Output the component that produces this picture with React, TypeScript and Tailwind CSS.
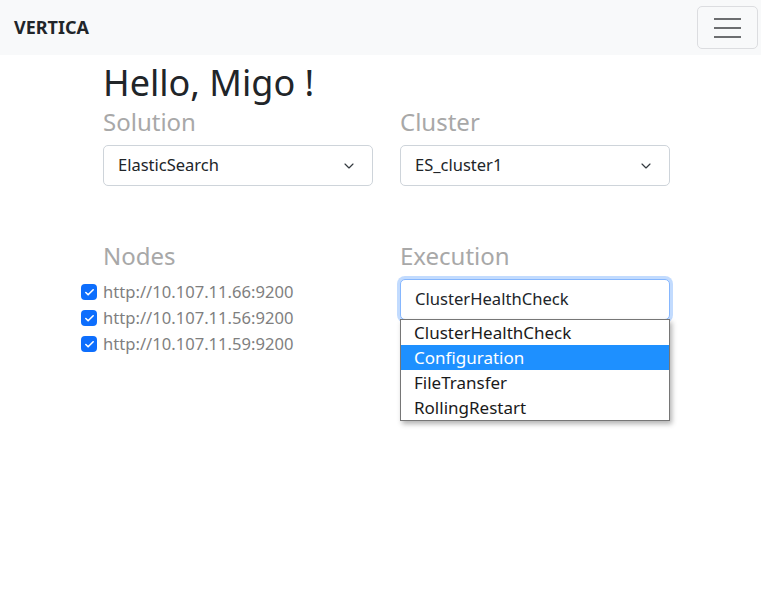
import { ChevronDown, Check } from "lucide-react";

const nodes = ["http://10.107.11.66:9200", "http://10.107.11.56:9200", "http://10.107.11.59:9200"];
const executions = ["ClusterHealthCheck", "Configuration", "FileTransfer", "RollingRestart"];

function SelectBox({ value }: { value: string }) {
  return (
    <div className="flex h-[41px] items-center justify-between rounded-[5px] border border-[#ced4da] bg-white pl-[14px] pr-[15px] text-[16.5px] text-[#212529]">
      <span>{value}</span>
      <ChevronDown size={16} strokeWidth={1.75} className="text-[#343a40]" />
    </div>
  );
}

export default function App() {
  return (
    <div className="min-h-[609px] bg-white font-['Noto_Sans',sans-serif] text-[#212529]">
      <nav className="flex h-[55px] items-center justify-between bg-[#f8f9fa] pl-[14px] pr-[3px]">
        <span className="text-[18px] font-bold text-[#212529]">VERTICA</span>
        <button className="flex h-[43px] w-[61px] flex-col items-center justify-center gap-[7px] rounded-[5px] border border-[#dcdde0]">
          <span className="h-[2px] w-[27px] bg-[#6c6e70]" />
          <span className="h-[2px] w-[27px] bg-[#6c6e70]" />
          <span className="h-[2px] w-[27px] bg-[#6c6e70]" />
        </button>
      </nav>
      <main className="ml-[103px] w-[567px]">
        <h1 className="mt-[5px] text-[36px] leading-[46px]">Hello, Migo !</h1>
        <div className="mt-[1px] grid grid-cols-2 gap-x-[27px]">
          <section>
            <h2 className="text-[24px] leading-[29px] text-[#a8a8a8]">Solution</h2>
            <div className="mt-[9px]">
              <SelectBox value="ElasticSearch" />
            </div>
            <h2 className="mt-[55px] text-[24px] leading-[29px] text-[#a8a8a8]">Nodes</h2>
            <ul className="mt-[9px]">
              {nodes.map((n) => (
                <li key={n} className="-ml-[22px] flex h-[26px] items-center gap-[6px] text-[16.6px] text-[#7f7f7f]">
                  <span className="flex h-[16px] w-[16px] items-center justify-center rounded-[4px] bg-[#0d6efd]">
                    <Check size={11} strokeWidth={3.5} className="text-white" />
                  </span>
                  {n}
                </li>
              ))}
            </ul>
          </section>
          <section>
            <h2 className="text-[24px] leading-[29px] text-[#a8a8a8]">Cluster</h2>
            <div className="mt-[9px]">
              <SelectBox value="ES_cluster1" />
            </div>
            <h2 className="mt-[55px] text-[24px] leading-[29px] text-[#a8a8a8]">Execution</h2>
            <div className="relative mt-[9px]">
              <div className="flex h-[41px] items-center rounded-[5px] border border-[#86b7fe] bg-white pl-[14px] text-[16.6px] shadow-[0_0_0_3px_rgba(13,110,253,0.25)]">
                ClusterHealthCheck
              </div>
              <ul className="absolute left-0 top-[40px] w-[270px] border border-[#767676] bg-white text-[17px] shadow-[2px_3px_5px_rgba(0,0,0,0.3)]">
                {executions.map((e) => (
                  <li
                    key={e}
                    className={
                      e === "Configuration"
                        ? "flex h-[25px] items-center bg-[#1e90ff] pl-[13px] text-white"
                        : "flex h-[25px] items-center pl-[13px] text-[#1a1a1a]"
                    }
                  >
                    {e}
                  </li>
                ))}
              </ul>
            </div>
          </section>
        </div>
      </main>
    </div>
  );
}
